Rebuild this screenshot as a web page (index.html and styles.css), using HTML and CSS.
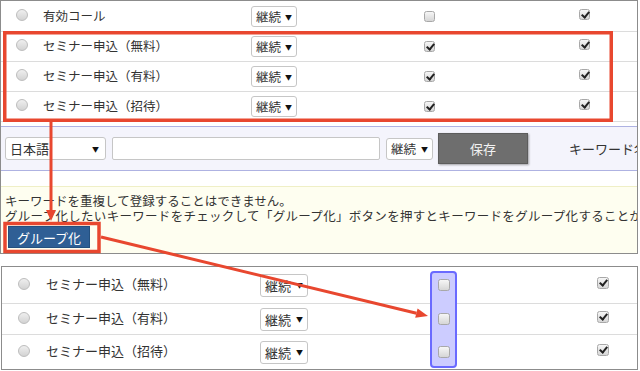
FILE: index.html
```html
<!DOCTYPE html>
<html lang="ja">
<head>
  <meta charset="UTF-8" />
  <title>キーワード設定</title>
  <link rel="stylesheet" href="styles.css">
</head>
<body>
  <div class="page">

    <section class="panel panel-top">
      <div class="kw-table">
        <div class="kw-row">
          <span class="radio"></span>
          <span class="kw-name">有効コール</span>
          <span class="sel">継続 <i>▼</i></span>
          <span class="cb col3"></span>
          <span class="cb checked col4"></span>
        </div>
        <div class="kw-row">
          <span class="radio"></span>
          <span class="kw-name">セミナー申込（無料）</span>
          <span class="sel">継続 <i>▼</i></span>
          <span class="cb checked col3"></span>
          <span class="cb checked col4"></span>
        </div>
        <div class="kw-row">
          <span class="radio"></span>
          <span class="kw-name">セミナー申込（有料）</span>
          <span class="sel">継続 <i>▼</i></span>
          <span class="cb checked col3"></span>
          <span class="cb checked col4"></span>
        </div>
        <div class="kw-row">
          <span class="radio"></span>
          <span class="kw-name">セミナー申込（招待）</span>
          <span class="sel">継続 <i>▼</i></span>
          <span class="cb checked col3"></span>
          <span class="cb checked col4"></span>
        </div>
      </div>

      <div class="kw-form">
        <span class="sel sel-lang">日本語 <i>▼</i></span>
        <span class="text-input"></span>
        <span class="sel sel-form">継続 <i>▼</i></span>
        <span class="save-btn">保存</span>
        <span class="kw-label">キーワード名</span>
      </div>

      <div class="notice">
        <p>キーワードを重複して登録することはできません。</p>
        <p class="notice-long">グループ化したいキーワードをチェックして「グループ化」ボタンを押すとキーワードをグループ化することができます。</p>
        <span class="group-btn">グループ化</span>
      </div>
    </section>

    <section class="panel panel-bottom">
      <div class="col-hilite"></div>
      <div class="kw-row row-a">
        <span class="radio"></span>
        <span class="kw-name">セミナー申込（無料）</span>
        <span class="sel">継続 <i>▼</i></span>
        <span class="cb col3"></span>
        <span class="cb checked col4"></span>
      </div>
      <div class="kw-row row-b">
        <span class="radio"></span>
        <span class="kw-name">セミナー申込（有料）</span>
        <span class="sel">継続 <i>▼</i></span>
        <span class="cb col3"></span>
        <span class="cb checked col4"></span>
      </div>
      <div class="kw-row row-c">
        <span class="radio"></span>
        <span class="kw-name">セミナー申込（招待）</span>
        <span class="sel">継続 <i>▼</i></span>
        <span class="cb col3"></span>
        <span class="cb checked col4"></span>
      </div>
    </section>

    <!-- annotation marks -->
    <svg class="marks" width="640" height="371" viewBox="0 0 640 371">
      <g fill="none" stroke="#e8472f" stroke-width="3.5">
        <rect x="4.75" y="32.75" width="606.5" height="87.5" />
        <rect x="5" y="223.5" width="94" height="28" />
      </g>
      <g stroke="#e8472f" stroke-width="3">
        <line x1="51" y1="122" x2="51" y2="211" />
        <line x1="101" y1="237" x2="416.5" y2="313.2" />
      </g>
      <g fill="#e8472f">
        <polygon points="46,210 56,210 51,221" />
        <polygon points="415.2,317.8 417.6,308.6 428,316" />
      </g>
    </svg>

  </div>
</body>
</html>
```

FILE: styles.css
```css
:root {
  --text-color: #333333;
  --panel-border: #8c8c8c;
  --row-line: #dcdcdc;
  --bar-bg: #f4f4fc;
  --bar-line: #aeb2e2;
  --notice-bg: #fefef0;
  --notice-line: #efefc6;
  --btn-blue: #2f5f95;
}

* {
  box-sizing: border-box;
  margin: 0;
  padding: 0;
}

body {
  font-family: "Noto Sans CJK JP", "Noto Sans", sans-serif;
  font-size: 12.5px;
  color: var(--text-color);
  background: #ffffff;
}

.page {
  position: relative;
  width: 640px;
  height: 371px;
  overflow: hidden;
}

.panel {
  border: 1px solid var(--panel-border);
  background: #ffffff;
  overflow: hidden;
}

.panel-top {
  width: 638px;
  height: 254px;
}

/* keyword rows */
.kw-table {
  padding-top: 1px;
}

.kw-row {
  display: flex;
  align-items: center;
  height: 30px;
  border-bottom: 1px solid var(--row-line);
  padding-left: 15px;
}

.radio {
  flex: none;
  width: 12px;
  height: 12px;
  border-radius: 50%;
  border: 1px solid #bdbdbd;
  background: linear-gradient(#efefef, #d3d3d3);
  margin-bottom: 3px;
}

.kw-name {
  flex: none;
  width: 208px;
  margin-left: 15px;
  margin-bottom: 3px;
  white-space: nowrap;
}

.sel {
  flex: none;
  display: flex;
  align-items: center;
  justify-content: space-between;
  width: 46px;
  height: 21px;
  padding: 0 4px 0 4px;
  border: 1px solid #c6c6c6;
  border-radius: 3px;
  background: #ffffff;
  font-size: 12.5px;
  white-space: nowrap;
}

.sel i {
  font-style: normal;
  font-size: 7px;
  color: #111;
}

.cb {
  flex: none;
  position: relative;
  width: 11px;
  height: 11px;
  border: 1px solid #a8a8a8;
  border-radius: 2.5px;
  background: linear-gradient(#f6f6f6, #d6d6d6);
}

.cb.checked::after {
  content: "";
  position: absolute;
  left: 3px;
  top: 0px;
  width: 3px;
  height: 6px;
  border-right: 2px solid #222;
  border-bottom: 2px solid #222;
  transform: rotate(40deg);
}

.panel-top .col3 {
  margin-left: 127px;
}

.panel-top .col4 {
  margin-left: 144px;
  margin-bottom: 4px;
}

/* form bar */
.kw-form {
  display: flex;
  align-items: center;
  height: 45px;
  margin-top: 4px;
  padding-left: 4px;
  background: var(--bar-bg);
  border-top: 1px solid var(--bar-line);
  border-bottom: 1px solid var(--bar-line);
  white-space: nowrap;
}

.sel-lang {
  width: 101px;
  height: 23px;
  padding: 0 6px 0 4px;
  font-size: 13px;
}

.text-input {
  flex: none;
  width: 268px;
  height: 23px;
  margin-left: 6px;
  border: 1px solid #c6c6c6;
  border-radius: 2px;
  background: #ffffff;
}

.sel-form {
  width: 47px;
  height: 22px;
  margin-left: 6px;
}

.save-btn {
  flex: none;
  width: 90px;
  height: 31px;
  margin-left: 5px;
  display: flex;
  align-items: center;
  justify-content: center;
  background: #6e6e6e;
  border: 1px solid #5c5c5c;
  color: #f2f2f2;
  font-size: 13px;
  box-shadow: 1px 1px 2px rgba(0, 0, 0, 0.35);
}

.kw-label {
  margin-left: 41px;
  font-size: 13px;
}

/* notice */
.notice {
  margin-top: 15px;
  height: 67px;
  padding: 6px 0 0 4px;
  background: var(--notice-bg);
  border-top: 1px solid var(--notice-line);
  white-space: nowrap;
}

.notice p {
  line-height: 15px;
}

.notice .notice-long {
  letter-spacing: 0.3px;
}

.group-btn {
  display: flex;
  align-items: center;
  justify-content: center;
  width: 82px;
  height: 22px;
  margin: 3px 0 0 3px;
  background: var(--btn-blue);
  border: 1px solid #24507f;
  color: #ffffff;
  font-size: 13px;
}

/* lower panel */
.panel-bottom {
  position: relative;
  width: 637px;
  height: 104px;
  margin: 12px 0 0 1px;
  font-size: 13px;
}

.panel-bottom .kw-row {
  padding-left: 16px;
}

.panel-bottom .row-a {
  height: 37px;
}

.panel-bottom .row-b {
  height: 31px;
}

.panel-bottom .row-c {
  height: 34px;
  border-bottom: none;
}

.panel-bottom .kw-name {
  width: 214px;
  margin-left: 16px;
}

.panel-bottom .sel {
  width: 48px;
  height: 23px;
  font-size: 13px;
}

.panel-bottom .cb {
  width: 12px;
  height: 12px;
  z-index: 2;
}

.panel-bottom .col3 {
  margin-left: 130px;
}

.panel-bottom .col4 {
  margin-left: 147px;
  margin-bottom: 4px;
}

.col-hilite {
  position: absolute;
  left: 428px;
  top: 4px;
  width: 27px;
  height: 97px;
  background: #ccccff;
  border: 2px solid #6a6aff;
  border-radius: 4px;
  z-index: 1;
}

.marks {
  position: absolute;
  top: 0;
  left: 0;
  pointer-events: none;
  z-index: 5;
}
```
